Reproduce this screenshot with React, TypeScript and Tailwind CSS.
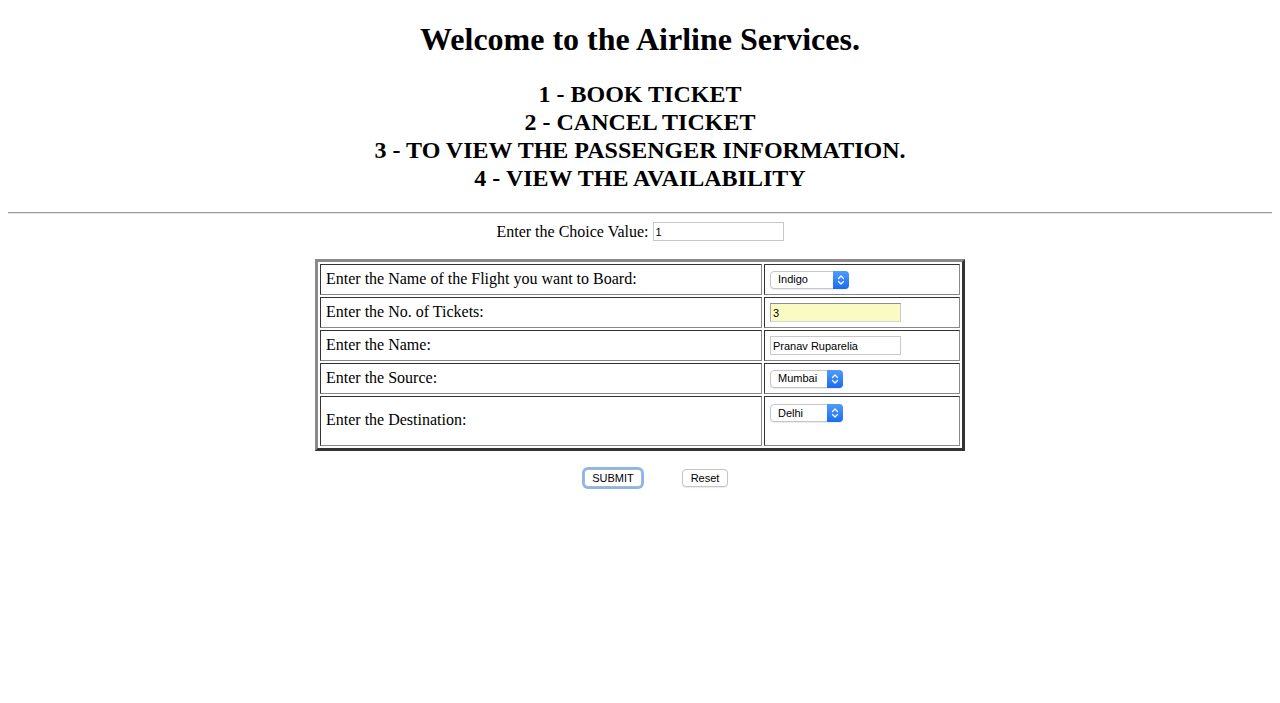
import React from "react";

function FakeSelect({ value, width }: { value: string; width: string }) {
  return (
    <div
      className={`inline-flex h-[18px] ${width} items-stretch rounded-[4px] border border-[#c6c6c6] bg-white align-middle shadow-[0_1px_1px_rgba(0,0,0,0.08)]`}
      style={{ fontFamily: '"Liberation Sans", Arial, sans-serif' }}
    >
      <span className="flex flex-1 items-center pl-[7px] text-[11px] leading-none text-black">{value}</span>
      <span className="-my-px -mr-px flex w-[16px] items-center justify-center rounded-r-[4px] bg-gradient-to-b from-[#4f9bfa] to-[#1a6cf0]">
        <svg width="8" height="12" viewBox="0 0 8 12" fill="none">
          <path d="M1.5 4.5 L4 2 L6.5 4.5" stroke="white" strokeWidth="1.3" strokeLinecap="round" strokeLinejoin="round" />
          <path d="M1.5 7.5 L4 10 L6.5 7.5" stroke="white" strokeWidth="1.3" strokeLinecap="round" strokeLinejoin="round" />
        </svg>
      </span>
    </div>
  );
}

function TextBox({ value, yellow }: { value: string; yellow?: boolean }) {
  return (
    <input
      readOnly
      value={value}
      className={`h-[19px] w-[131px] px-[2px] align-middle text-[11px] text-black outline-none ${
        yellow ? "border border-t-[#8f8f8f] border-l-[#a8a8a8] border-r-[#c8c8c8] border-b-[#d4d4d4] bg-[#fafbc2]" : "border border-[#c8c8c8] bg-white"
      }`}
      style={{ fontFamily: '"Liberation Sans", Arial, sans-serif' }}
    />
  );
}

const cellCls = "border border-t-[#333] border-l-[#333] border-r-[#8a8a8a] border-b-[#8a8a8a] px-[5px] py-0";

export default function App() {
  const rows: { label: string; control: React.ReactNode; h: string; top?: boolean }[] = [
    { label: "Enter the Name of the Flight you want to Board:", control: <FakeSelect value="Indigo" width="w-[79px]" />, h: "h-[31px]" },
    { label: "Enter the No. of Tickets:", control: <TextBox value="3" yellow />, h: "h-[31px]" },
    { label: "Enter the Name:", control: <TextBox value="Pranav Ruparelia" />, h: "h-[31px]" },
    { label: "Enter the Source:", control: <FakeSelect value="Mumbai" width="w-[73px]" />, h: "h-[31px]" },
    { label: "Enter the Destination:", control: <FakeSelect value="Delhi" width="w-[73px]" />, h: "h-[50px]", top: true },
  ];

  return (
    <div
      className="min-h-[703px] w-full bg-white px-2 text-black"
      style={{ fontFamily: '"Liberation Serif", "Times New Roman", serif' }}
    >
      <div className="flow-root">
        <h1 className="mt-[21px] text-center text-[32px] font-bold leading-[37px]">Welcome to the Airline Services.</h1>
        <div className="mt-[22px] text-center text-[24px] font-bold leading-[28px]">
          <div>1 - BOOK TICKET</div>
          <div>2 - CANCEL TICKET</div>
          <div>3 - TO VIEW THE PASSENGER INFORMATION.</div>
          <div>4 - VIEW THE AVAILABILITY</div>
        </div>
        <div className="mt-[20px] h-[2px] border-t border-b border-t-[#9a9a9a] border-b-[#e6e6e6]" />
        <div className="mt-[7px] flex h-[21px] items-center justify-center text-[16px]">
          <span>Enter the Choice Value:</span>
          <span className="ml-[4px] flex">
            <TextBox value="1" />
          </span>
        </div>
        <table className="mx-auto mt-[17px] w-[650px] border-separate border-spacing-[2px] border-[3px] border-t-[#8a8a8a] border-l-[#8a8a8a] border-r-[#333] border-b-[#333] text-[16px]">
          <tbody>
            {rows.map((r, i) => (
              <tr key={i}>
                <td className={`${cellCls} ${r.h} w-[442px] pb-[2px] align-middle leading-[18px]`}>{r.label}</td>
                <td className={`${cellCls} ${r.h} ${r.top ? "align-top pt-[7px]" : "align-middle"}`}>
                  <div className="flex items-center">{r.control}</div>
                </td>
              </tr>
            ))}
          </tbody>
        </table>
        <div
          className="mt-[18px] flex items-center justify-center"
          style={{ fontFamily: '"Liberation Sans", Arial, sans-serif' }}
        >
          <span className="w-[32px]" />
          <button className="h-[18px] w-[58px] rounded-[4px] border border-[#b5b5b5] bg-white text-[11px] leading-none text-black shadow-[0_0_0_2px_#86b6f7]">
            SUBMIT
          </button>
          <span className="w-[40px]" />
          <button className="h-[18px] w-[46px] rounded-[4px] border border-[#c4c4c4] bg-white text-[11px] leading-none text-black shadow-[0_1px_1px_rgba(0,0,0,0.08)]">
            Reset
          </button>
        </div>
      </div>
    </div>
  );
}
